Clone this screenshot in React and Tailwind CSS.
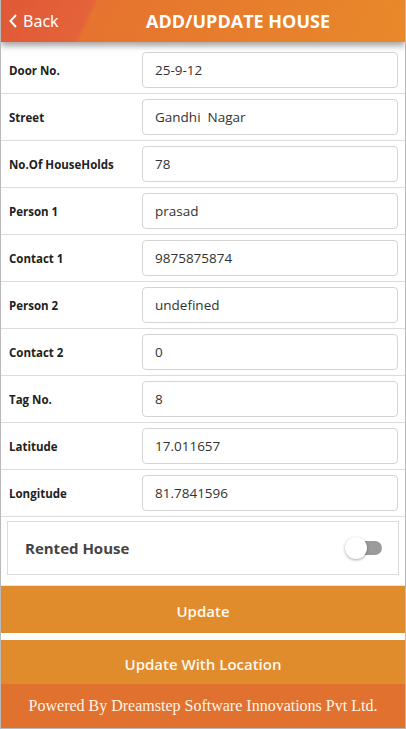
import { useState } from 'react'

const campos = [
  { label: 'Door No.', value: '25-9-12' },
  { label: 'Street', value: 'Gandhi  Nagar' },
  { label: 'No.Of HouseHolds', value: '78' },
  { label: 'Person 1', value: 'prasad' },
  { label: 'Contact 1', value: '9875875874' },
  { label: 'Person 2', value: 'undefined' },
  { label: 'Contact 2', value: '0' },
  { label: 'Tag No.', value: '8' },
  { label: 'Latitude', value: '17.011657' },
  { label: 'Longitude', value: '81.7841596' },
]

const App = () => {
  const [valores, setValores] = useState(campos.map(c => c.value))
  const [rentada, setRentada] = useState(false)

  return (
    <div className="w-[406px] h-[729px] flex flex-col bg-white border-l border-r border-b border-[#b9b9b9] overflow-hidden font-['Open_Sans',sans-serif]">
      {/* HEADER */}
      <header className="relative z-10 h-[42px] shrink-0 flex items-center bg-[linear-gradient(115deg,#e05836_0%,#e4633a_22%,#e6732f_23%,#e8892a_100%)] shadow-[0_4px_6px_rgba(0,0,0,0.35)]">
        <button className="flex items-center gap-[5px] pl-[7px] text-white text-[16px] font-['Noto_Sans',sans-serif]">
          <svg width="10" height="16" viewBox="0 0 10 16" fill="none">
            <path d="M8 2 L2.5 8 L8 14" stroke="white" strokeWidth="2" />
          </svg>
          Back
        </button>
        <h1 className="absolute left-[145px] top-0 h-[42px] flex items-center text-white font-bold text-[18px]">
          ADD/UPDATE HOUSE
        </h1>
      </header>

      {/* FORMULARIO */}
      <div className="pt-[5px]">
        {campos.map((c, i) => (
          <div key={c.label} className="h-[47px] flex items-center border-b border-[#dcdcdc]">
            <label className="w-[141px] pl-[8px] pt-[2px] text-[11.5px] font-bold text-[#222]">{c.label}</label>
            <input
              type="text"
              className="w-[256px] h-[36px] px-[12px] border border-[#d4d4d4] rounded-[4px] text-[13.5px] text-[#333] outline-none"
              value={valores[i]}
              onChange={e => setValores(valores.map((v, j) => (j === i ? e.target.value : v)))}
            />
          </div>
        ))}
      </div>

      {/* RENTADA */}
      <div className="mx-[6px] mt-[4px] h-[54px] border border-[#dcdcdc] flex items-center justify-between pl-[17px] pr-[15px]">
        <span className="text-[15px] font-bold text-[#444]">Rented House</span>
        <button onClick={() => setRentada(!rentada)} className="relative w-[38px] h-[24px]">
          <span className="absolute left-[12px] top-[5px] w-[25px] h-[14px] rounded-full bg-[#9b9b9b]"></span>
          <span className="absolute left-0 top-[1px] w-[22px] h-[22px] rounded-full bg-white shadow-[0_1px_3px_rgba(0,0,0,0.35)]"></span>
        </button>
      </div>

      <div className="mt-[10px] border-t border-[#e4e4e4]"></div>

      {/* BOTONES */}
      <button className="h-[47px] pt-[3px] bg-[#e08b2c] text-[#fff8ee] text-[15px] font-semibold">Update</button>
      <div className="h-[7px] bg-white"></div>
      <button className="h-[44px] pt-[4px] bg-[#e08b2c] text-[#fff8ee] text-[15px] font-semibold">Update With Location</button>

      <footer className="flex-1 bg-[#e0712f] flex items-center justify-center text-[#fff4e6] text-[16px] font-['Liberation_Serif',serif]">
        Powered By Dreamstep Software Innovations Pvt Ltd.
      </footer>
    </div>
  )
}

export default App
